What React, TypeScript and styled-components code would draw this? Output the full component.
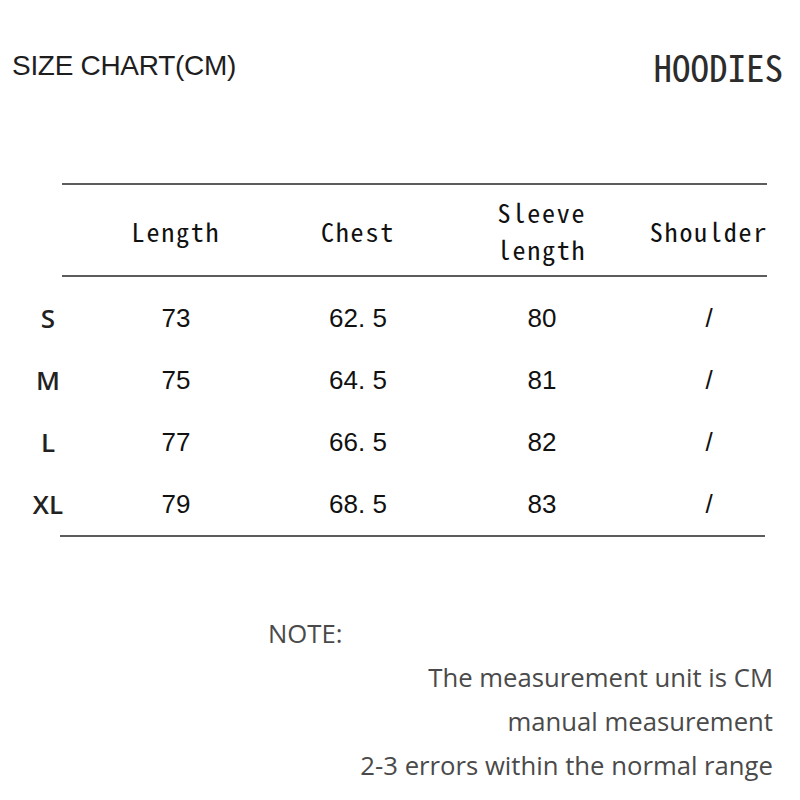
import React, { FC } from 'react'
import styled, { createGlobalStyle } from 'styled-components'

const GlobalStyle = createGlobalStyle`
html, body {
  margin: 0;
  padding: 0;
  background: #fff;
}
`

const sizes = [
    { label: 'S', length: '73', chest: '62. 5', sleeve: '80', shoulder: '/' },
    { label: 'M', length: '75', chest: '64. 5', sleeve: '81', shoulder: '/' },
    { label: 'L', length: '77', chest: '66. 5', sleeve: '82', shoulder: '/' },
    { label: 'XL', length: '79', chest: '68. 5', sleeve: '83', shoulder: '/' },
]

const notes = [
    'The measurement unit is CM',
    'manual measurement',
    '2-3 errors within the normal range',
]

const App: FC = () => {
    return (
        <Page>
            <GlobalStyle />
            <TitleBar>
                <Title>SIZE CHART(CM)</Title>
                <Category>HOODIES</Category>
            </TitleBar>

            <Table>
                <Rule />
                <HeadRow>
                    <span />
                    <HeadCell>Length</HeadCell>
                    <HeadCell>Chest</HeadCell>
                    <HeadCell>Sleeve<br />length</HeadCell>
                    <HeadCell>Shoulder</HeadCell>
                </HeadRow>
                <Rule />
                <Body>
                    {sizes.map(row => (
                        <Row key={row.label}>
                            <SizeLabel>{row.label}</SizeLabel>
                            <Value>{row.length}</Value>
                            <Value>{row.chest}</Value>
                            <Value>{row.sleeve}</Value>
                            <Value>{row.shoulder}</Value>
                        </Row>
                    ))}
                </Body>
                <Rule $shift={-2} />
            </Table>

            <Notes>
                <NoteTitle>NOTE:</NoteTitle>
                {notes.map(text => <NoteLine key={text}>{text}</NoteLine>)}
            </Notes>
        </Page>
    )
}

const Page = styled.div`
width: 800px;
height: 800px;
box-sizing: border-box;
padding: 44px 17px 0 12px;
display: flex;
flex-direction: column;
overflow: hidden;
`

const TitleBar = styled.div`
display: flex;
justify-content: space-between;
align-items: center;
height: 44px;
`

const Title = styled.h1`
margin: 0;
font-family: "Liberation Sans", Arial, sans-serif;
font-weight: normal;
font-size: 28px;
letter-spacing: -0.3px;
line-height: 44px;
color: #1e1e1e;
`

const Category = styled.div`
font-family: "Noto Sans Mono CJK SC", "DejaVu Sans Mono", monospace;
font-size: 37px;
line-height: 44px;
color: #2c2c2c;
`

const Table = styled.div`
margin: 95px 0 0 8px;
width: 754px;
`

const Rule = styled.div<{ $shift?: number }>`
height: 2px;
width: 705px;
margin-left: ${p => 42 + (p.$shift || 0)}px;
background: #5c5c5c;
`

const columns = '56px 200px 164px 204px 130px'

const HeadRow = styled.div`
display: grid;
grid-template-columns: ${columns};
align-items: center;
height: 90px;
`

const HeadCell = styled.div`
text-align: center;
font-family: "Noto Sans Mono CJK SC", "DejaVu Sans Mono", monospace;
font-size: 26px;
letter-spacing: 1.8px;
line-height: 37px;
color: #111;
`

const Body = styled.div`
padding-top: 10px;
`

const Row = styled.div`
display: grid;
grid-template-columns: ${columns};
align-items: center;
height: 62px;
`

const SizeLabel = styled.div`
text-align: center;
font-family: "Open Sans", sans-serif;
font-weight: 600;
font-size: 26px;
color: #222;
`

const Value = styled.div`
text-align: center;
font-family: "Liberation Sans", Arial, sans-serif;
font-size: 26px;
color: #111;
`

const Notes = styled.div`
margin-top: 75px;
display: flex;
flex-direction: column;
font-family: "Open Sans", sans-serif;
font-size: 25.7px;
line-height: 44px;
color: #4a4a4a;
`

const NoteTitle = styled.div`
padding-left: 256px;
`

const NoteLine = styled.div`
text-align: right;
padding-right: 10px;
`

export default App
